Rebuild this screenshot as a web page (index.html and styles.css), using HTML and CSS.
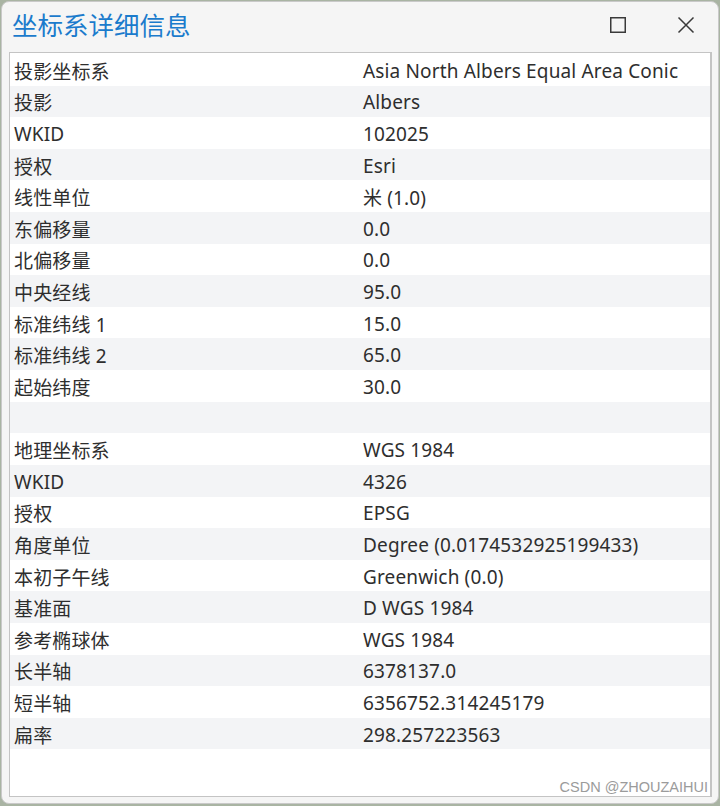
FILE: index.html
```html
<!DOCTYPE html>
<html lang="zh-CN">
<head>
<meta charset="utf-8">
<title>坐标系详细信息</title>
<link rel="stylesheet" href="styles.css">
</head>
<body>
<div class="window">
  <div class="titlebar">
    <div class="title">坐标系详细信息</div>
    <div class="controls">
      <span class="ctl max"><svg width="18" height="18" viewBox="0 0 18 18"><rect x="1.75" y="1.75" width="14.5" height="14.5" fill="none" stroke="#3a3a3a" stroke-width="1.5"/></svg></span>
      <span class="ctl close"><svg width="18" height="18" viewBox="0 0 18 18"><path d="M1.5 1.5 L16.5 16.5 M16.5 1.5 L1.5 16.5" fill="none" stroke="#3a3a3a" stroke-width="1.5"/></svg></span>
    </div>
  </div>
  <div class="panel">
    <div class="row"><span class="k">投影坐标系</span><span class="v">Asia North Albers Equal Area Conic</span></div>
    <div class="row"><span class="k">投影</span><span class="v">Albers</span></div>
    <div class="row"><span class="k">WKID</span><span class="v">102025</span></div>
    <div class="row"><span class="k">授权</span><span class="v">Esri</span></div>
    <div class="row"><span class="k">线性单位</span><span class="v">米 (1.0)</span></div>
    <div class="row"><span class="k">东偏移量</span><span class="v">0.0</span></div>
    <div class="row"><span class="k">北偏移量</span><span class="v">0.0</span></div>
    <div class="row"><span class="k">中央经线</span><span class="v">95.0</span></div>
    <div class="row"><span class="k">标准纬线 1</span><span class="v">15.0</span></div>
    <div class="row"><span class="k">标准纬线 2</span><span class="v">65.0</span></div>
    <div class="row"><span class="k">起始纬度</span><span class="v">30.0</span></div>
    <div class="row"><span class="k"></span><span class="v"></span></div>
    <div class="row"><span class="k">地理坐标系</span><span class="v">WGS 1984</span></div>
    <div class="row"><span class="k">WKID</span><span class="v">4326</span></div>
    <div class="row"><span class="k">授权</span><span class="v">EPSG</span></div>
    <div class="row"><span class="k">角度单位</span><span class="v">Degree (0.0174532925199433)</span></div>
    <div class="row"><span class="k">本初子午线</span><span class="v">Greenwich (0.0)</span></div>
    <div class="row"><span class="k">基准面</span><span class="v">D WGS 1984</span></div>
    <div class="row"><span class="k">参考椭球体</span><span class="v">WGS 1984</span></div>
    <div class="row"><span class="k">长半轴</span><span class="v">6378137.0</span></div>
    <div class="row"><span class="k">短半轴</span><span class="v">6356752.314245179</span></div>
    <div class="row"><span class="k">扁率</span><span class="v">298.257223563</span></div>
    <div class="watermark">CSDN @ZHOUZAIHUI</div>
  </div>
</div>
</body>
</html>
```
FILE: styles.css
```css
html, body {
  margin: 0;
  padding: 0;
}
body {
  background: #a9b4a3;
  width: 720px;
  height: 806px;
  overflow: hidden;
}
.window {
  box-sizing: border-box;
  margin: 1px 0 0 1px;
  width: 718px;
  height: 803px;
  background: #f5f5f5;
  border: 1px solid #c9c9c9;
  border-radius: 8px;
  display: flex;
  flex-direction: column;
}
.titlebar {
  height: 50px;
  display: flex;
  align-items: center;
  justify-content: space-between;
  padding: 0 0 0 10px;
  flex: none;
}
.title {
  font-family: "Noto Sans CJK SC", sans-serif;
  font-size: 25.5px;
  color: #1b7bcc;
  line-height: 30px;
  margin-top: -7px;
}
.controls {
  display: flex;
  align-items: center;
  margin-top: -4px;
}
.ctl {
  display: flex;
  width: 18px;
  height: 18px;
}
.max { margin-right: 50px; }
.close { margin-right: 23px; }
.panel {
  position: relative;
  box-sizing: border-box;
  margin: 0 6px 0 7px;
  height: 745px;
  background: #ffffff;
  border: 1px solid #c4c4c4;
  border-right: 2px solid #c4c4c4;
  padding: 1px 0 0 0;
}
.row {
  box-sizing: border-box;
  height: 31.62px;
  padding-top: 2px;
  display: flex;
  align-items: center;
  font-family: "Segoe UI", "Noto Sans", "Noto Sans CJK SC", sans-serif;
  font-size: 19px;
  letter-spacing: 0.15px;
  color: #2e2e2e;
}
.row:nth-child(even) {
  background: #f3f4f6;
}
.k {
  width: 349px;
  padding-left: 4px;
  flex: none;
  white-space: nowrap;
}
.v {
  white-space: nowrap;
}
.watermark {
  position: absolute;
  right: 2px;
  bottom: 1px;
  font-family: "Liberation Sans", Arial, sans-serif;
  font-size: 14.5px;
  color: #9b9b9b;
}
```
